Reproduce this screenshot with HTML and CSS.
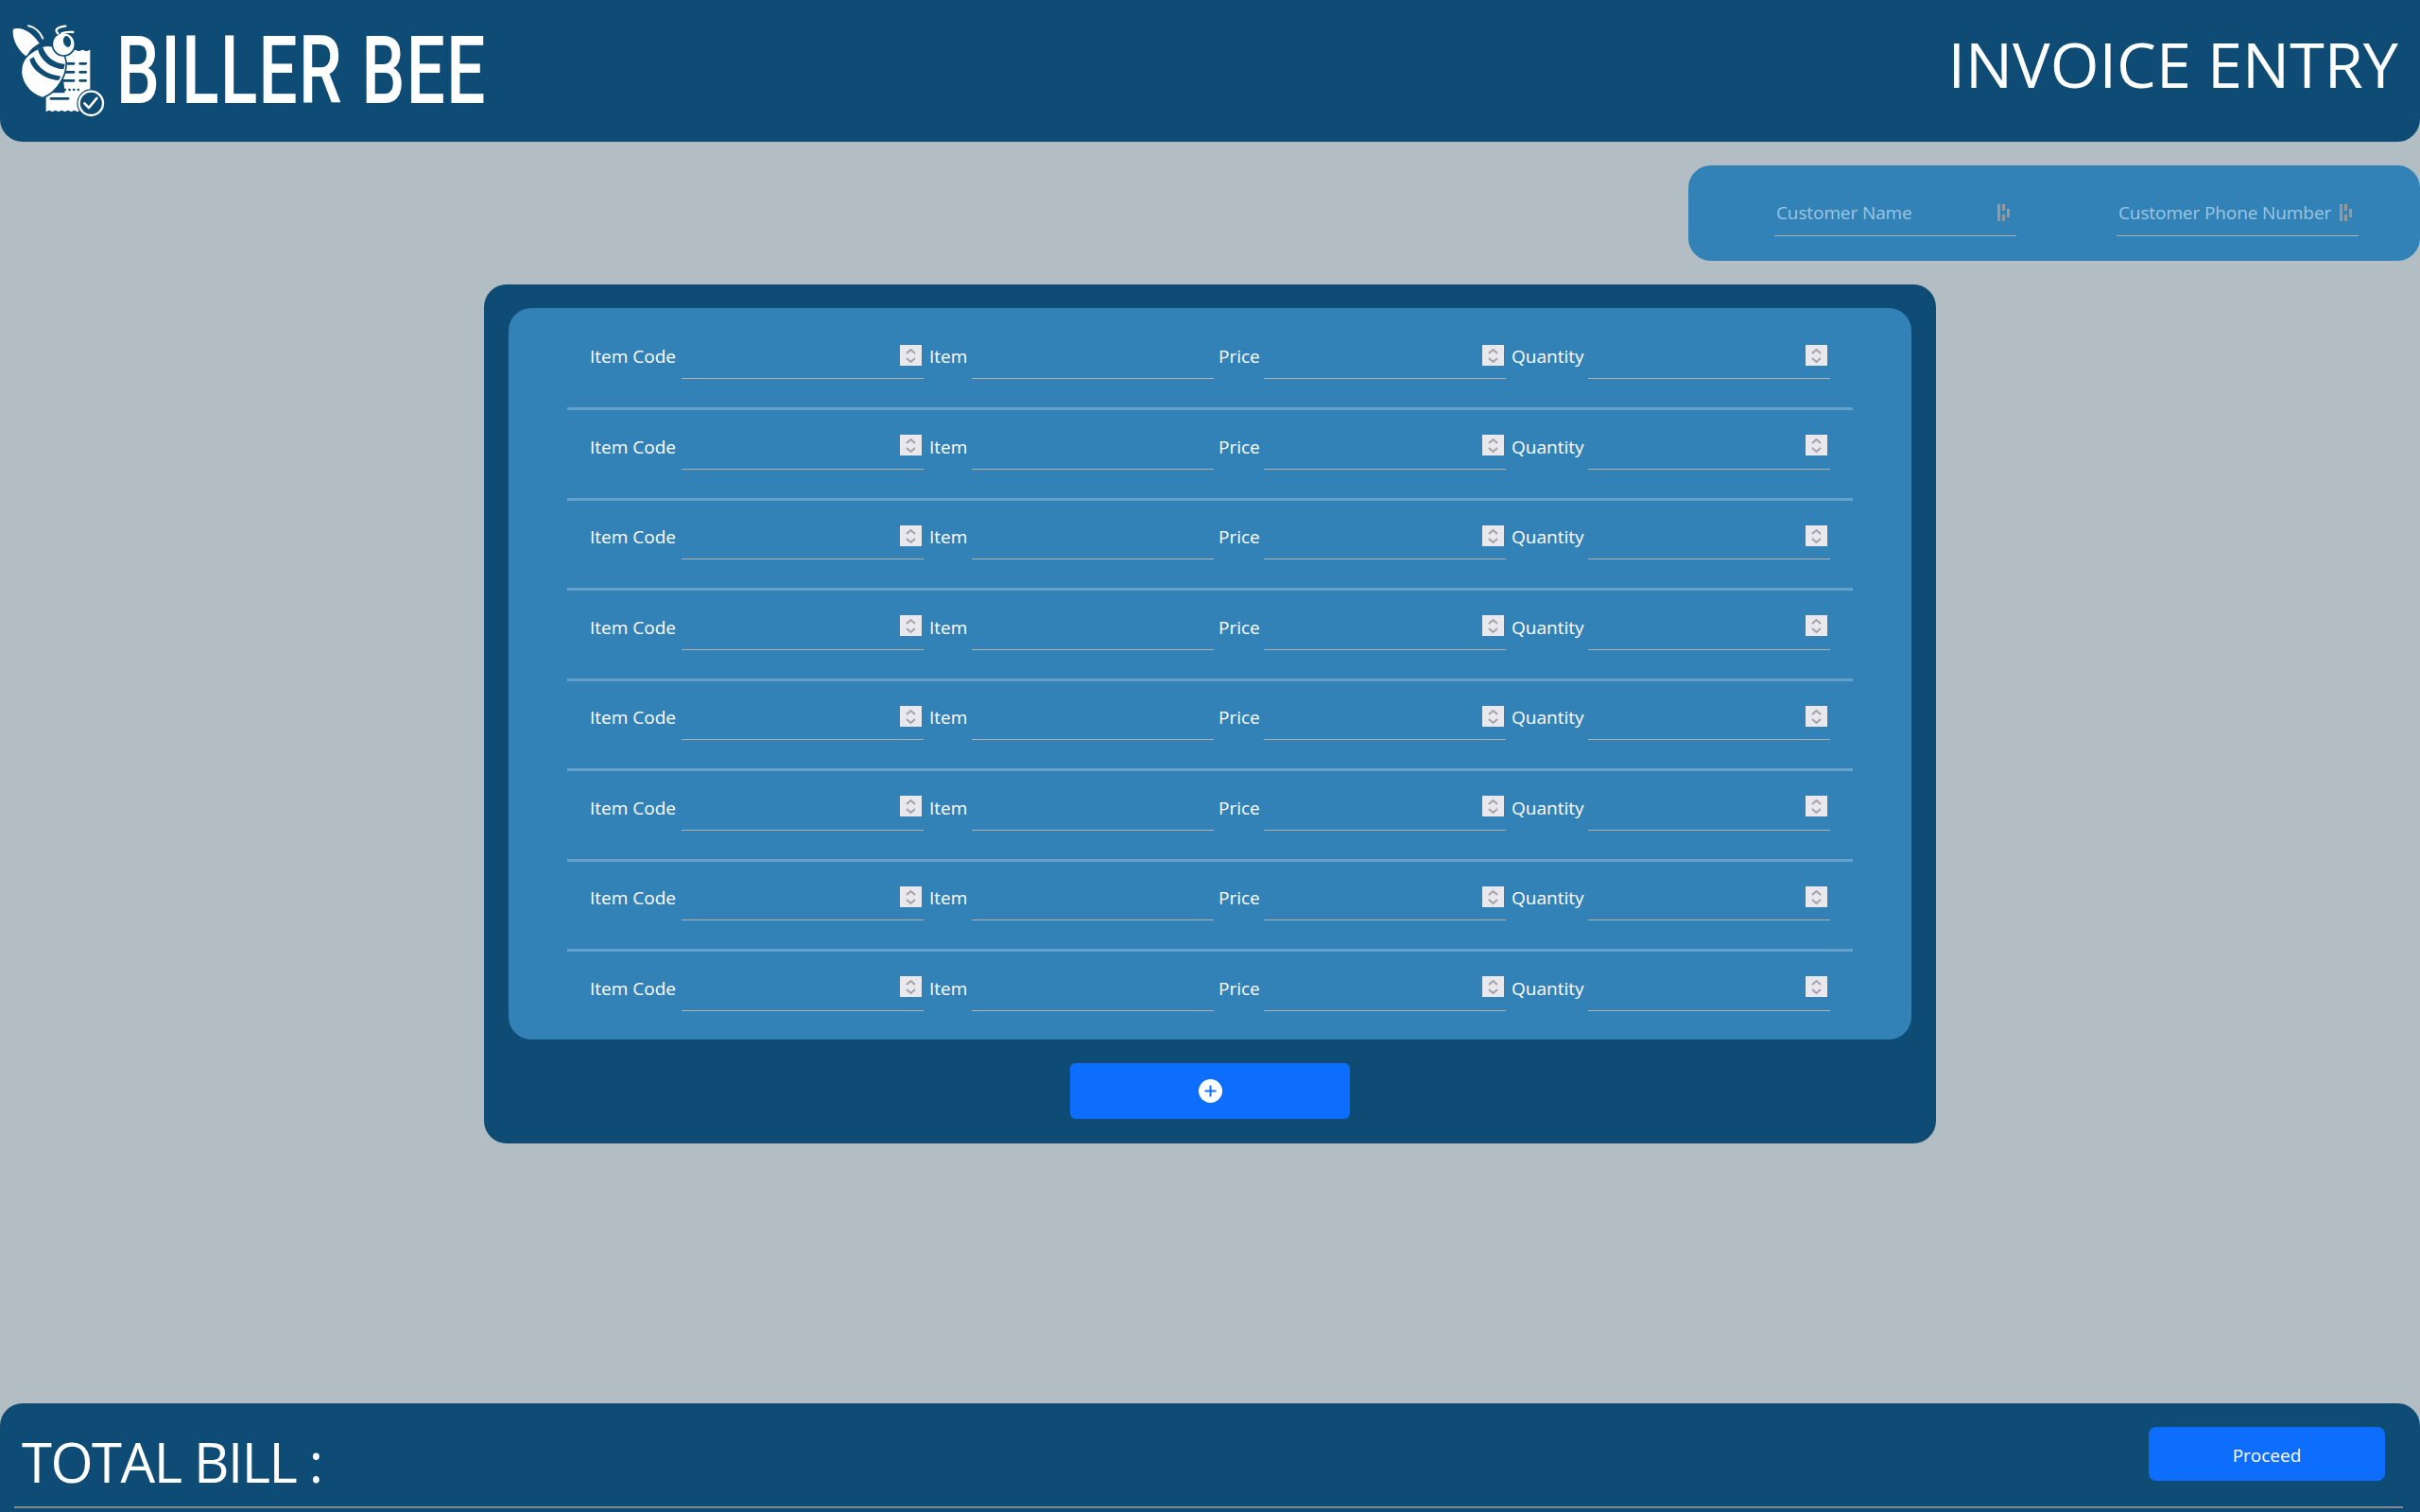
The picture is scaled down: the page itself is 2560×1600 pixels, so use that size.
FILE: index.html
```html
<!DOCTYPE html>
<html lang="en">
<head>
  <meta charset="UTF-8">
  <title>Biller Bee - Invoice Entry</title>
  <link rel="stylesheet" href="styles.css">
</head>
<body>
  <header class="topbar">
    <div class="brand">
      <svg class="logo" viewBox="0 0 390 360">
        <!-- receipt -->
        <path fill="#fff" d="M190 128l12 5 12-5 12 5 12-5 12 5 12-5 12 5 12-5V325l-10-5-10 5-10-5-10 5-10-5-10 5-10-5-10 5-10-5-10 5-10-5-10 5-10-5-10 5V265h60z"/>
        <g fill="#0f4c75">
          <rect x="250" y="168" width="26" height="8" rx="4"/>
          <rect x="250" y="195" width="26" height="8" rx="4"/>
          <rect x="250" y="222" width="26" height="8" rx="4"/>
          <rect x="212" y="168" width="26" height="8" rx="4"/>
          <rect x="185" y="195" width="53" height="8" rx="4"/>
          <rect x="185" y="222" width="53" height="8" rx="4"/>
          <rect x="158" y="279" width="62" height="8" rx="4"/>
        </g>
        <path stroke="#0f4c75" stroke-width="7" stroke-linecap="round" stroke-dasharray="1 13" d="M178 255H250"/>
        <!-- check badge -->
        <circle cx="289" cy="298" r="42" fill="#0f4c75" stroke="#0f4c75" stroke-width="6"/>
        <circle cx="289" cy="298" r="38" fill="none" stroke="#fff" stroke-width="7"/>
        <path fill="none" stroke="#fff" stroke-width="8" stroke-linecap="round" stroke-linejoin="round" d="M268 298l14 14 25-30"/>
        <!-- wings -->
        <path fill="#fff" d="M42 62C70 52 105 75 125 108 105 118 92 130 86 150 62 135 36 95 42 62z"/>
        <path fill="none" stroke="#fff" stroke-width="6" stroke-linecap="round" d="M90 52C110 56 128 72 136 92"/>
        <!-- body -->
        <path fill="#fff" stroke="#0f4c75" stroke-width="5" d="M125 122C165 100 205 130 210 165 214 205 185 262 135 281 90 268 62 225 68 185 72 155 95 135 125 122z"/>
        <path fill="#0f4c75" d="M120 127C128 162 162 188 202 190L206 174C172 171 147 151 136 120z"/>
        <path fill="#0f4c75" d="M94 159C102 193 142 222 186 225L193 212C150 208 120 186 107 151z"/>
        <!-- head -->
        <ellipse cx="202" cy="110" rx="36" ry="37" fill="#fff" stroke="#0f4c75" stroke-width="5"/>
        <ellipse cx="213" cy="102" rx="12" ry="18" transform="rotate(-15 213 102)" fill="#0f4c75"/>
        <path fill="none" stroke="#fff" stroke-width="7" stroke-linecap="round" d="M184 76C172 66 180 56 208 53M196 76C208 70 220 71 232 72"/>
      </svg>
      <span class="brand-name">BILLER BEE</span>
    </div>
    <h1 class="page-title">INVOICE ENTRY</h1>
  </header>

  <section class="customer">
    <div class="customer-field">
      <span>Customer Name</span>
      <svg class="stub" viewBox="0 0 13 18"><path fill="#999" d="M0 0h3v18H0zM5 0h3v7H5zM5 11h3v7H5zM10 5h3v9h-3z"/></svg>
    </div>
    <div class="customer-field">
      <span>Customer Phone Number</span>
      <svg class="stub" viewBox="0 0 13 18"><path fill="#999" d="M0 0h3v18H0zM5 0h3v7H5zM5 11h3v7H5zM10 5h3v9h-3z"/></svg>
    </div>
  </section>

  <main class="entry-card">
    <div class="rows" id="rows"></div>
    <button class="btn add-btn" aria-label="Add item">
      <svg viewBox="0 0 25 25"><circle cx="12.5" cy="12.5" r="12.5" fill="#fff"/><path stroke="#0d6efd" stroke-width="2" d="M12.5 6.5v12M6.5 12.5h12"/></svg>
    </button>
  </main>

  <footer class="totalbar">
    <div class="total-row">
      <h2 class="total-label">TOTAL BILL :</h2>
      <button class="btn proceed-btn">Proceed</button>
    </div>
    <hr class="total-line">
  </footer>

  <script src="rows.js"></script>
</body>
</html>
```

FILE: styles.css
```css
* { box-sizing: border-box; }
html, body { height: 100%; }
body {
  margin: 0;
  background-color: #b2bec3;
  color: #fff;
  font-family: "Open Sans", "Noto Sans", sans-serif;
  display: flex;
  flex-direction: column;
}

.topbar {
  height: 150px;
  flex: none;
  background-color: #0f4c75;
  border-radius: 0 0 24px 24px;
  display: flex;
  justify-content: space-between;
  padding-right: 23px;
}
.brand { display: flex; align-items: flex-start; }
.logo { width: 130px; height: 120px; margin-top: 10px; flex: none; }
/* no condensed face is installed, so the wordmark is squeezed */
.brand-name {
  margin-left: -7px;
  margin-top: 15px;
  font-family: Roboto, "Liberation Sans", sans-serif;
  font-size: 101px;
  font-weight: 500;
  letter-spacing: 1.9px;
  line-height: 120px;
  white-space: nowrap;
  transform: scaleX(0.72);
  transform-origin: left center;
}
.page-title {
  margin: 19px 0 0;
  font-size: 66.5px;
  font-weight: 400;
  line-height: 96px;
}

.customer {
  align-self: flex-end;
  width: 774px;
  height: 101px;
  margin-top: 25px;
  flex: none;
  background-color: #3282b8;
  border-radius: 24px;
  display: flex;
  gap: 106px;
  padding: 25px 0 0 91px;
}
.customer-field {
  width: 256px;
  height: 50px;
  border-bottom: 1px solid #b6aea8;
  color: #9cc6e2;
  font-size: 19px;
  letter-spacing: -0.1px;
  display: flex;
  align-items: center;
  justify-content: space-between;
  padding: 0 7px 0 2px;
}
.customer-field span { padding-top: 1px; }
.stub { width: 13px; height: 18px; }

.entry-card {
  width: 1536px;
  height: 909px;
  margin-top: 25px;
  align-self: center;
  flex: none;
  background-color: #0f4c75;
  border-radius: 24px;
  padding: 25px 26px;
  display: flex;
  flex-direction: column;
  align-items: center;
}
.rows {
  width: 100%;
  height: 774px;
  flex: none;
  background-color: #3282b8;
  border-radius: 24px;
  padding-top: 25px;
}
.item-row {
  height: 50px;
  display: flex;
  justify-content: center;
  align-items: center;
  padding-left: 1px;
  font-size: 19px;
}
.item-row label { margin-right: 5px; padding-top: 2px; white-space: nowrap; flex: none; }
.lbl-code { width: 91px; text-indent: -1px; }
.lbl-item { width: 40px; }
.lbl-price { width: 42px; text-indent: -1px; }
.lbl-qty { width: 76px; }
.cell {
  width: 256px;
  height: 50px;
  margin-right: 6px;
  flex: none;
  border-bottom: 1px solid #b6aea8;
  display: flex;
  justify-content: flex-end;
  align-items: flex-start;
  padding: 13.7px 2px 0 0;
}
.cell:last-child { margin-right: 0; padding-right: 3px; }
.spin { width: 23px; height: 22px; background-color: #e9e9ed; }
.spin svg { display: block; width: 23px; height: 22px; }
.row-line {
  height: 3px;
  width: 1360px;
  margin: 30px auto 12.5px;
  background-color: rgba(255,255,255,0.25);
}

.btn {
  border: none;
  background-color: #0d6efd;
  color: #fff;
  font-family: inherit;
  cursor: pointer;
}
.add-btn {
  width: 296px;
  height: 59px;
  margin-top: 25px;
  flex: none;
  border-radius: 6px;
  display: flex;
  align-items: center;
  justify-content: center;
}
.add-btn svg { width: 25px; height: 25px; }

.totalbar {
  height: 115px;
  margin-top: auto;
  flex: none;
  background-color: #0f4c75;
  border-radius: 24px 24px 0 0;
  padding: 25px 18px 0 15px;
}
.total-row {
  height: 84px;
  display: flex;
  justify-content: space-between;
  padding: 0 19px 0 8px;
}
.total-label {
  margin: 0;
  font-size: 58px;
  font-weight: 400;
  letter-spacing: -1.5px;
  line-height: 74px;
}
.proceed-btn {
  width: 250px;
  height: 57px;
  border-radius: 8px;
  font-size: 19px;
  padding-top: 3px;
}
.total-line {
  height: 2px;
  margin: 0;
  border: none;
  background-color: #808a90;
}
```

FILE: rows.js
```js
const rows = document.getElementById("rows");
const chevrons = '<svg viewBox="0 0 23 22"><path fill="none" stroke="#a3a1ab" stroke-width="2" d="M7 9l4.5-4 4.5 4M7 14l4.5 4 4.5-4"/></svg>';

function cell(hasSpin) {
  return '<div class="cell">' + (hasSpin ? '<span class="spin">' + chevrons + '</span>' : '') + '</div>';
}

for (let i = 0; i < 8; i++) {
  rows.insertAdjacentHTML("beforeend",
    '<div class="item-row">' +
      '<label class="lbl-code">Item Code</label>' + cell(true) +
      '<label class="lbl-item">Item</label>' + cell(false) +
      '<label class="lbl-price">Price</label>' + cell(true) +
      '<label class="lbl-qty">Quantity</label>' + cell(true) +
    '</div>' + (i < 7 ? '<div class="row-line"></div>' : ''));
}
```
